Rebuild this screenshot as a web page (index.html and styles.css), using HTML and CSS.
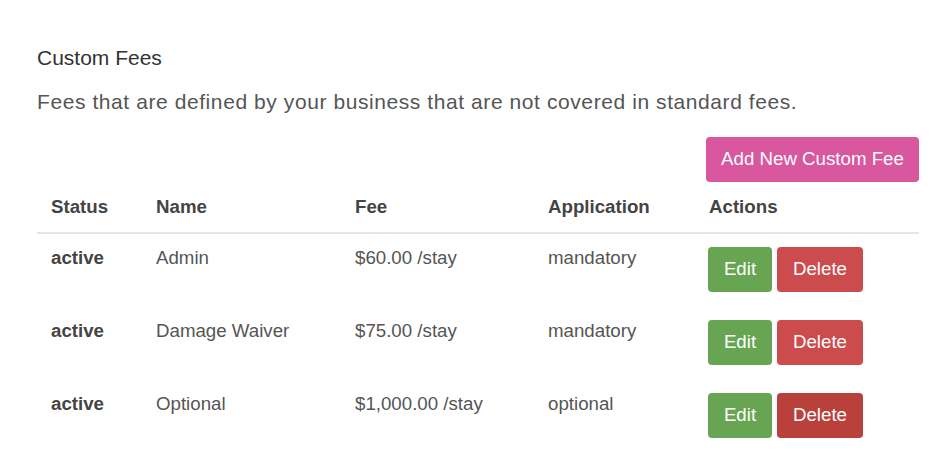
FILE: index.html
```html
<!DOCTYPE html>
<html>
<head>
<meta charset="utf-8">
<link rel="stylesheet" href="styles.css">
</head>
<body>
<div class="page">
  <h2 class="title">Custom Fees</h2>
  <p class="desc">Fees that are defined by your business that are not covered in standard fees.</p>
  <div class="toolbar">
    <button class="btn btn-pink">Add New Custom Fee</button>
  </div>
  <table class="fees">
    <colgroup>
      <col class="c1"><col class="c2"><col class="c3"><col class="c4"><col class="c5">
    </colgroup>
    <thead>
      <tr><th>Status</th><th>Name</th><th>Fee</th><th>Application</th><th>Actions</th></tr>
    </thead>
    <tbody>
      <tr>
        <td class="status">active</td><td>Admin</td><td>$60.00 /stay</td><td>mandatory</td>
        <td class="actions"><button class="btn btn-green">Edit</button><button class="btn btn-red">Delete</button></td>
      </tr>
      <tr>
        <td class="status">active</td><td>Damage Waiver</td><td>$75.00 /stay</td><td>mandatory</td>
        <td class="actions"><button class="btn btn-green">Edit</button><button class="btn btn-red">Delete</button></td>
      </tr>
      <tr>
        <td class="status">active</td><td>Optional</td><td>$1,000.00 /stay</td><td>optional</td>
        <td class="actions"><button class="btn btn-green">Edit</button><button class="btn btn-red btn-red-active">Delete</button></td>
      </tr>
    </tbody>
  </table>
</div>
</body>
</html>
```

FILE: styles.css
```css
html, body {
  margin: 0;
  padding: 0;
  background: #ffffff;
}
body {
  font-family: "Liberation Sans", Arial, Helvetica, sans-serif;
  color: #444;
}
.page {
  width: 882px;
  margin-left: 37px;
  padding-top: 43px;
}
.title {
  margin: 0;
  font-size: 21px;
  font-weight: normal;
  line-height: 30px;
  color: #333;
}
.desc {
  margin: 14px 0 0;
  font-size: 21px;
  line-height: 30px;
  letter-spacing: 0.58px;
  color: #555;
}
.toolbar {
  display: flex;
  justify-content: flex-end;
  margin-top: 20px;
}
.btn {
  font-family: "Liberation Sans", Arial, Helvetica, sans-serif;
  font-size: 18.7px;
  height: 45px;
  padding: 0 16px;
  border: 1px solid transparent;
  border-radius: 4px;
  color: #fff;
  cursor: pointer;
  line-height: 1;
}
.btn-pink {
  background: #d9579f;
  padding: 0;
  width: 213px;
}
.btn-green {
  background: #67a553;
  width: 64px;
  padding: 0;
}
.btn-red {
  background: #cc4b4c;
  width: 86px;
  padding: 0;
  margin-left: 5px;
}
.btn-red-active {
  background: #b9403b;
}
.fees {
  width: 100%;
  border-collapse: collapse;
  table-layout: fixed;
  font-size: 18.7px;
}
.c1 { width: 105px; }
.c2 { width: 199px; }
.c3 { width: 193px; }
.c4 { width: 161px; }
.c5 { width: 224px; }
.fees th {
  text-align: left;
  font-weight: bold;
  color: #444;
  padding: 12px 14px;
  line-height: 26px;
  border-bottom: 2px solid #e4e4ea;
}
.fees td {
  vertical-align: top;
  padding: 11px 14px 0;
  line-height: 26px;
  height: 62px;
  color: #555;
}
.fees td.status {
  font-weight: bold;
  color: #444;
}
.fees td.actions {
  padding-top: 13px;
  padding-left: 13px;
  height: 60px;
  white-space: nowrap;
}
```
